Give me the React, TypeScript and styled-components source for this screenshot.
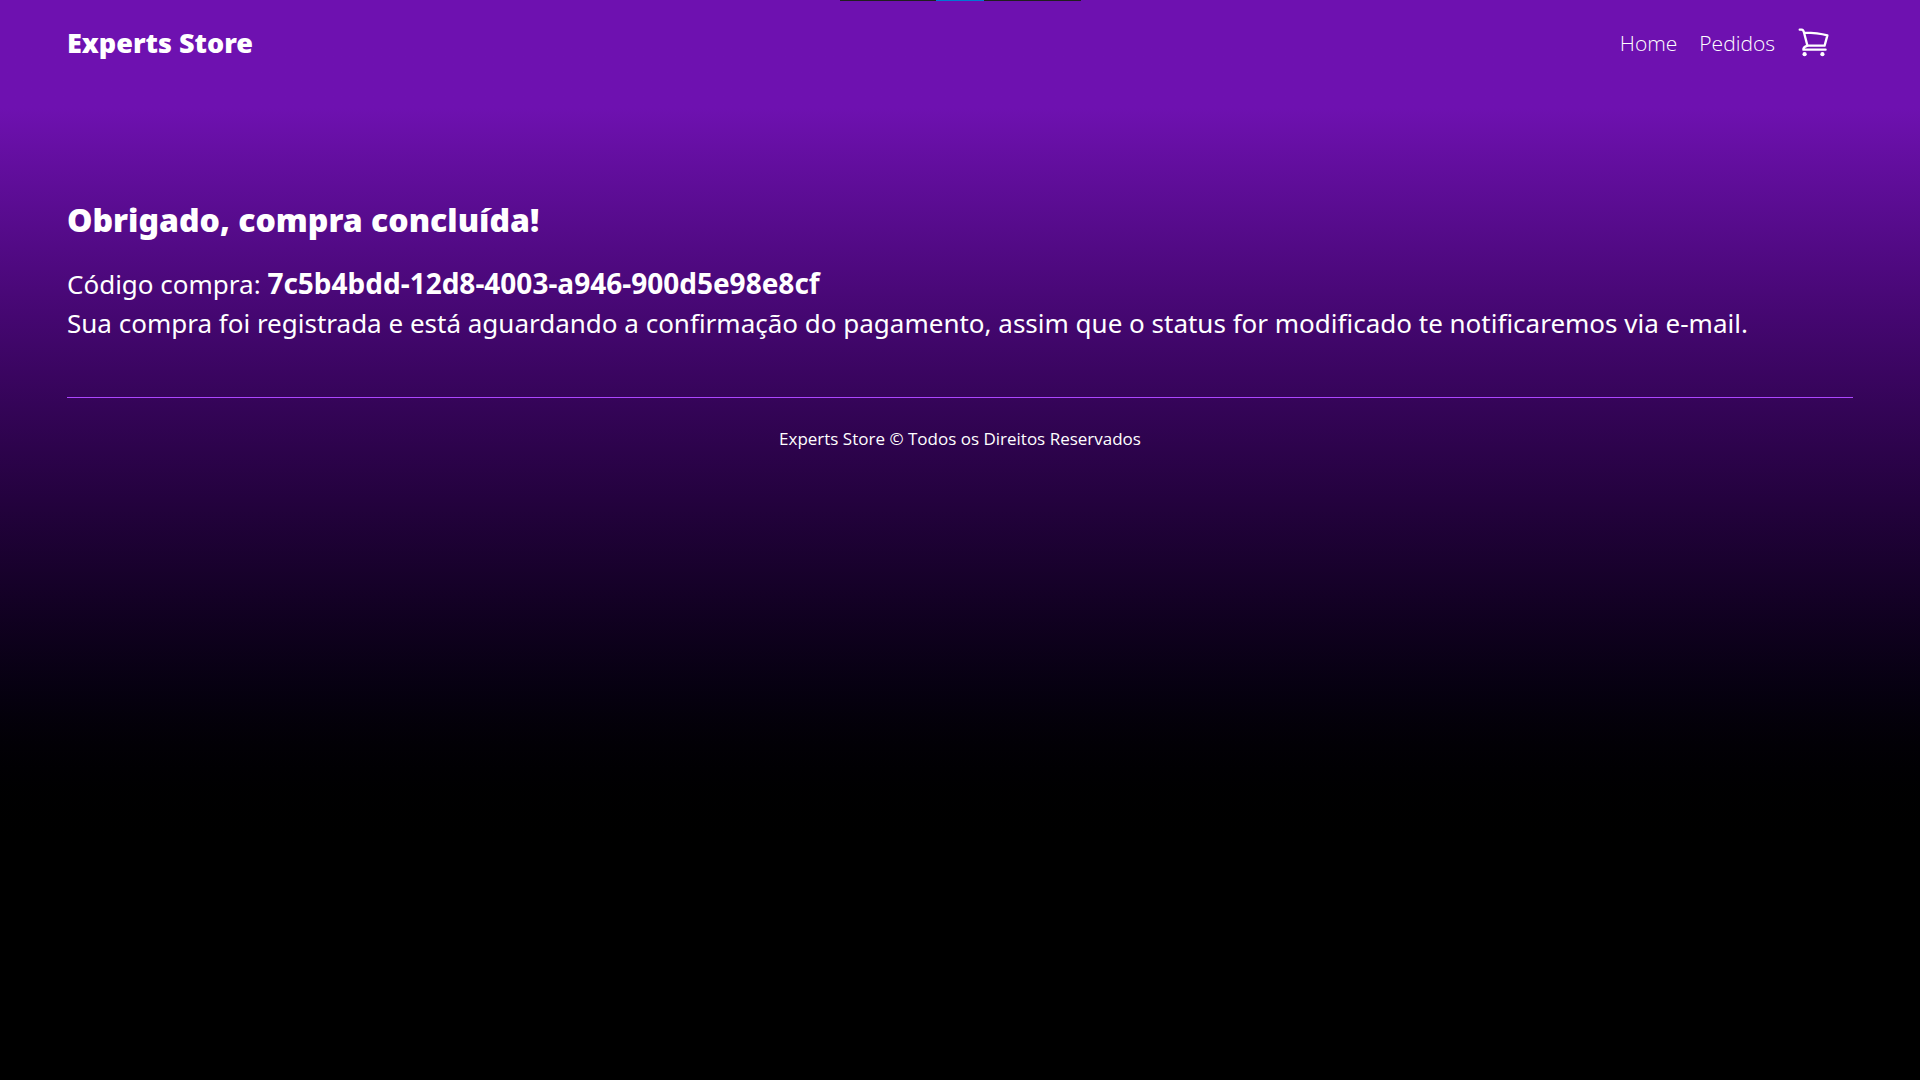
import React from "react";
import styled, { createGlobalStyle } from "styled-components";

const GlobalStyle = createGlobalStyle`
  *, *::before, *::after { box-sizing: border-box; }
  body {
    margin: 0;
    background: #000;
    color: #fff;
    font-family: "Segoe UI", "Open Sans", "Noto Sans", sans-serif;
  }
`;

const Page = styled.div`
  position: relative;
  min-height: 100vh;
  padding: 0 67px;
  background: linear-gradient(to bottom in oklab, #6e11b0 10%, #000 80%);
`;

const TopIndicator = styled.div`
  position: absolute;
  top: 0;
  left: 50%;
  width: 241px;
  height: 1px;
  margin-left: -120px;
  background: linear-gradient(to right, #1f1f1f 96px, #0078d4 96px 144px, #1f1f1f 144px);
`;

const Header = styled.header`
  display: flex;
  align-items: center;
  justify-content: space-between;
  height: 85px;
  padding-right: 24px;
`;

const Brand = styled.a`
  color: inherit;
  font-family: "Segoe UI", "Noto Sans", sans-serif;
  font-size: 27px;
  font-weight: 900;
  text-decoration: none;
`;

const Nav = styled.nav`
  display: flex;
  align-items: center;
  gap: 22px;
`;

const NavLink = styled.a`
  display: flex;
  color: inherit;
  font-size: 21px;
  font-weight: 300;
  text-decoration: none;
`;

const Main = styled.main`
  padding: 110px 0 54px;
  font-family: "Segoe UI", "Noto Sans", sans-serif;
  font-size: 26px;
  line-height: 39px;
`;

const Title = styled.h1`
  margin: 0 0 19px;
  font-size: 32px;
  font-weight: 900;
  line-height: 50px;
`;

const Message = styled.p`
  margin: 0;
`;

const OrderCode = styled.strong`
  font-size: 28px;
  font-weight: 700;
`;

const Footer = styled.footer`
  padding: 28px 0;
  border-top: 1px solid #ad46ff;
  font-size: 17px;
  line-height: 26px;
  text-align: center;
`;

function CartIcon() {
  return (
    <svg width="32" height="32" viewBox="0 0 32 32" fill="none" stroke="currentColor" strokeWidth="2.3" strokeLinecap="round" strokeLinejoin="round" aria-hidden="true">
      <path d="M2.7 2.7H4.6Q6.4 2.9 7 5.5L10.4 18.6H27.6L30.4 8.4Q21 5.7 7.2 5.6" />
      <path d="M10.4 18.6Q6 20.2 6.4 22.7H28.6" />
      <circle cx="7.6" cy="27.2" r="2.1" fill="currentColor" stroke="none" />
      <circle cx="25.4" cy="27.2" r="2.1" fill="currentColor" stroke="none" />
    </svg>
  );
}

export default function App() {
  return (
    <>
      <GlobalStyle />
      <Page>
        <TopIndicator />
        <Header>
          <Brand href="#">Experts Store</Brand>
          <Nav>
            <NavLink href="#">Home</NavLink>
            <NavLink href="#pedidos">Pedidos</NavLink>
            <NavLink href="#carrinho" aria-label="Carrinho">
              <CartIcon />
            </NavLink>
          </Nav>
        </Header>
        <Main>
          <Title>Obrigado, compra concluída!</Title>
          <Message>
            Código compra: <OrderCode>7c5b4bdd-12d8-4003-a946-900d5e98e8cf</OrderCode>
          </Message>
          <Message>
            Sua compra foi registrada e está aguardando a confirmação do pagamento, assim que o status for
            modificado te notificaremos via e-mail.
          </Message>
        </Main>
        <Footer>Experts Store © Todos os Direitos Reservados</Footer>
      </Page>
    </>
  );
}
